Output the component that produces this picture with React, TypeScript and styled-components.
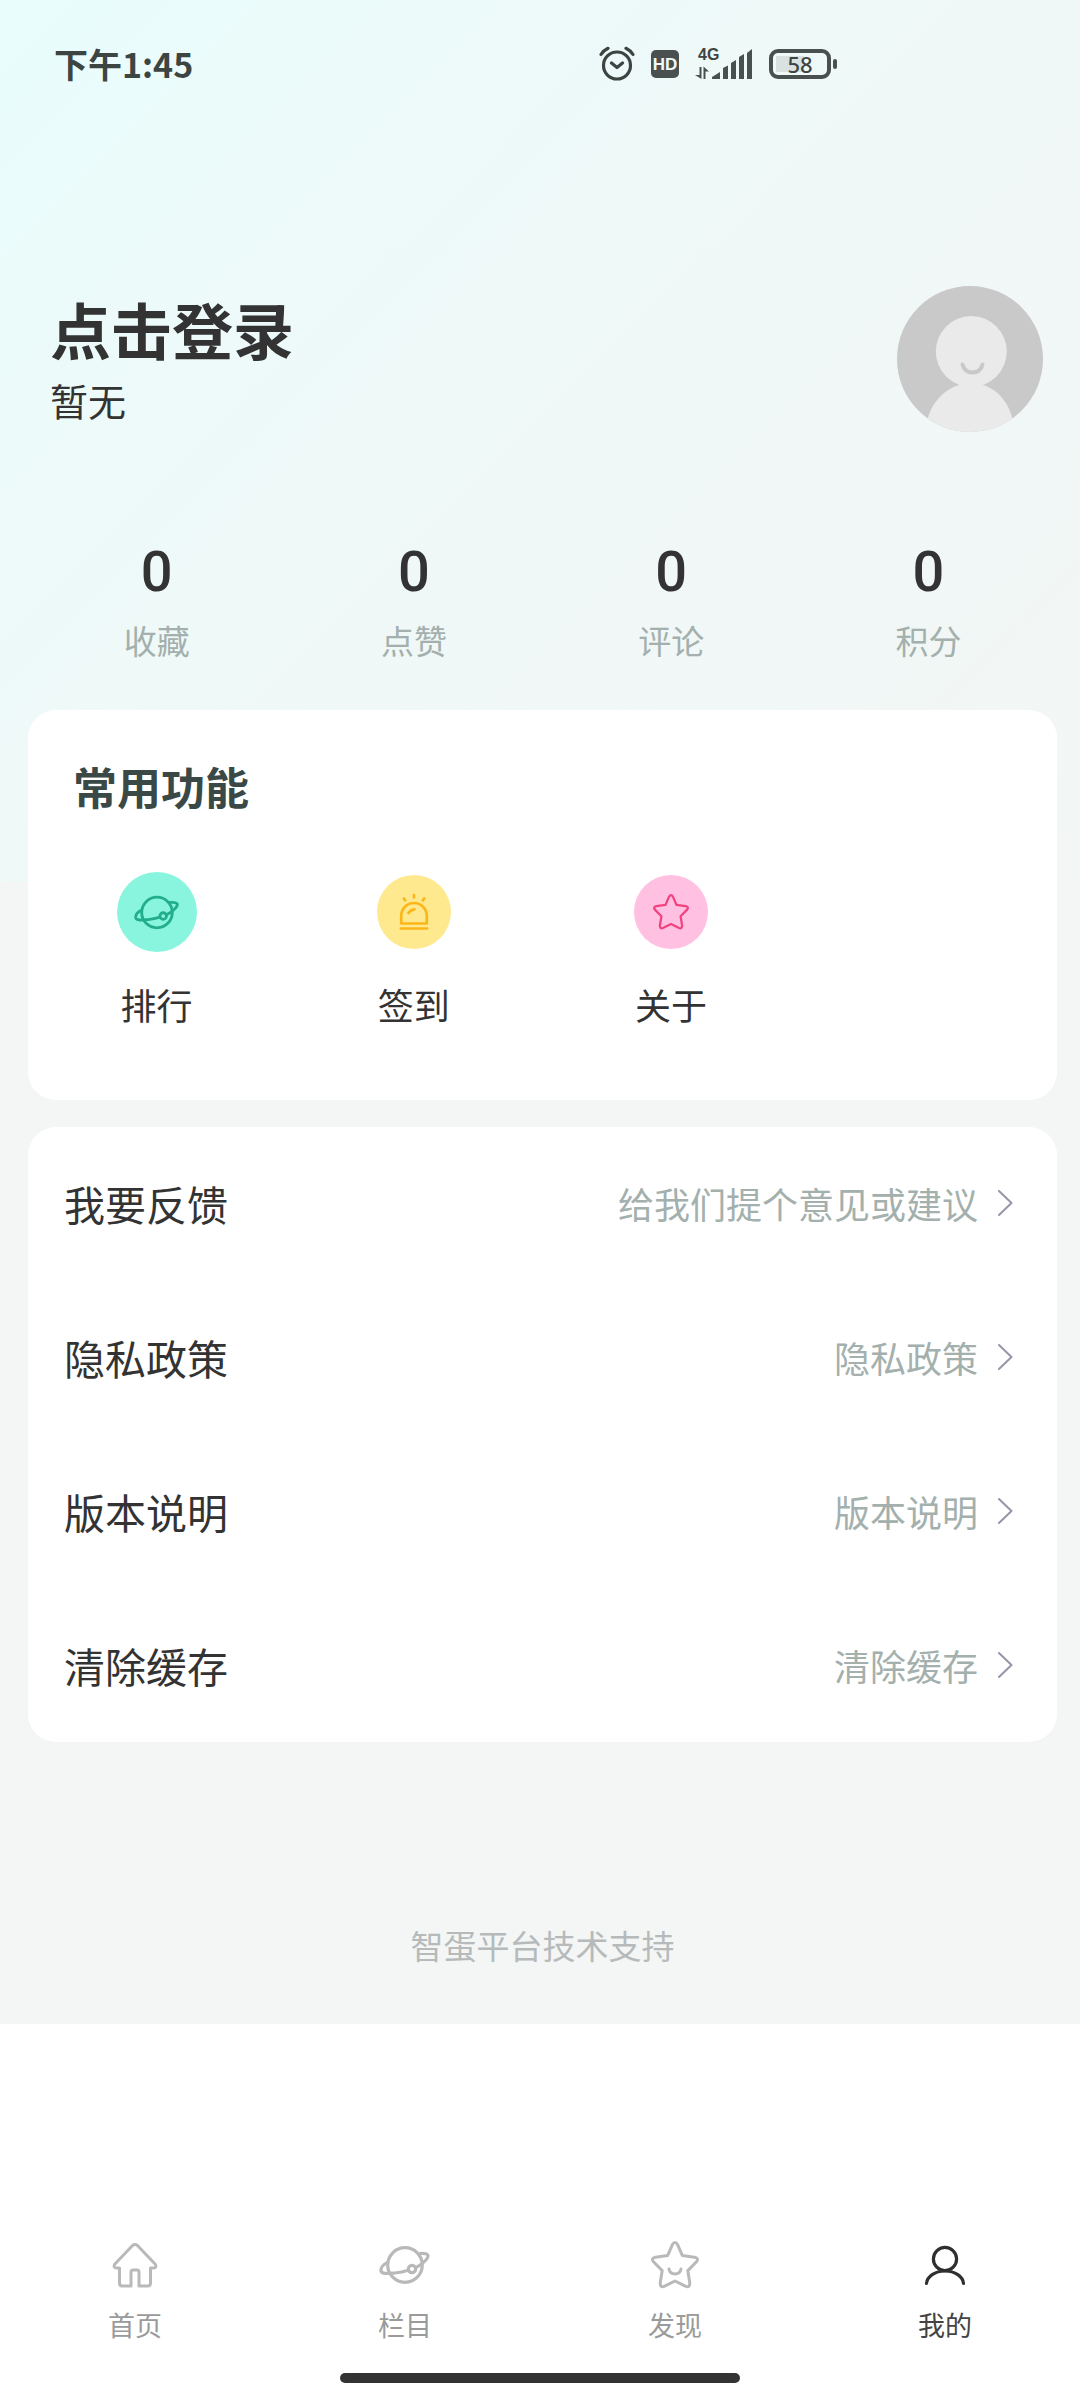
import React from "react";
import styled, { createGlobalStyle } from "styled-components";

const GlobalStyle = createGlobalStyle`
  *, *::before, *::after { box-sizing: border-box; }
  body {
    margin: 0;
    background: #fff;
    color: #333;
    font-family: "Noto Sans CJK SC", "Noto Sans", sans-serif;
  }
  button {
    margin: 0;
    padding: 0;
    border: 0;
    background: none;
    color: inherit;
    font: inherit;
    text-align: left;
    cursor: pointer;
  }
  a { color: inherit; text-decoration: none; }
  h1, h2, p, ul, dl, dd { margin: 0; padding: 0; }
  ul { list-style: none; }
  svg { display: block; }
`;

const Page = styled.div`
  display: flex;
  flex-direction: column;
  min-height: 100vh;
`;

const Content = styled.main`
  padding: 0 23px 54px 28px;
  background:
    linear-gradient(135deg, #e8fdfc 0%, #edfaf9 28%, #f0f8f7 60%, #f3f6f5 100%) top / 100% 882px no-repeat,
    #f3f6f5;
`;

const StatusBar = styled.div`
  display: flex;
  align-items: center;
  justify-content: space-between;
  height: 128px;
  padding: 0 220px 0 26px;
  color: #3d4543;
`;

const Clock = styled.time`
  font-size: 34px;
  font-weight: 700;
  line-height: 48px;
`;

const StatusIcons = styled.div`
  display: flex;
  align-items: center;
  gap: 16px;
`;

const HdBadge = styled.span`
  width: 28px;
  height: 28px;
  border-radius: 5px;
  background: #4a504f;
  color: #f0fafa;
  font: 700 17px/29px "Liberation Sans", sans-serif;
  text-align: center;
`;

const Signal = styled.div`
  position: relative;
`;

const Network = styled.span`
  position: absolute;
  top: 0;
  left: 3px;
  font: 700 16px/14px "Liberation Sans", sans-serif;
`;

const Battery = styled.div`
  display: flex;
  align-items: center;
  gap: 2px;

  &::after {
    content: "";
    width: 4px;
    height: 10px;
    border-radius: 2px;
    background: #4a504f;
  }
`;

const BatteryBody = styled.span`
  width: 62px;
  height: 30px;
  border: 4px solid #4a504f;
  border-radius: 9px;
  background: linear-gradient(90deg, #d9e2e1 58%, transparent 58%) 3px 3px / 48px 16px no-repeat;
  font: 500 22px/22px "Noto Sans", sans-serif;
  text-align: center;
`;

const Profile = styled.button`
  display: flex;
  align-items: center;
  justify-content: space-between;
  width: 100%;
  margin-top: 158px;
  padding: 0 14px 0 22px;
`;

const UserName = styled.h1`
  font-size: 61px;
  font-weight: 700;
  line-height: 82px;
`;

const UserNote = styled.p`
  font-size: 38px;
  line-height: 60px;
`;

const Stats = styled.dl`
  display: grid;
  grid-template-columns: repeat(4, 1fr);
  margin-top: 108px;
  text-align: center;
`;

const Stat = styled.div`
  display: flex;
  flex-direction: column-reverse;
  gap: 12px;
`;

const StatLabel = styled.dt`
  color: #a3b0ad;
  font-size: 33px;
  line-height: 48px;
`;

const StatValue = styled.dd`
  font-family: Roboto, "Noto Sans CJK SC", sans-serif;
  font-size: 56px;
  font-weight: 500;
  line-height: 64px;
`;

const Card = styled.section`
  border-radius: 28px;
  background: #fff;
`;

const FeatureCard = styled(Card)`
  margin-top: 46px;
  padding: 44px 0 68px;
`;

const CardTitle = styled.h2`
  padding: 0 45px;
  color: #3a4846;
  font-size: 44px;
  font-weight: 700;
  line-height: 64px;
`;

const Features = styled.div`
  display: grid;
  grid-template-columns: repeat(4, 1fr);
  margin-top: 54px;
`;

const Feature = styled.button`
  display: flex;
  flex-direction: column;
  align-items: center;
  gap: 24px;
  font-size: 36px;
  line-height: 56px;
`;

const IconSlot = styled.span`
  display: grid;
  place-items: center;
  height: 80px;
`;

const Disc = styled.span<{ $size: number; $bg: string; $ink: string }>`
  display: grid;
  place-items: center;
  width: ${(p) => p.$size}px;
  height: ${(p) => p.$size}px;
  border-radius: 50%;
  background: ${(p) => p.$bg};
  color: ${(p) => p.$ink};
`;

const MenuCard = styled(Card)`
  margin-top: 27px;
`;

const MenuList = styled.ul`
  display: grid;
  gap: 1px;
`;

const MenuRow = styled.button`
  display: flex;
  align-items: center;
  width: 100%;
  height: 153px;
  padding: 0 44px 2px 36px;
`;

const MenuLabel = styled.span`
  flex: 1;
  font-size: 41px;
  line-height: 60px;
`;

const MenuValue = styled.span`
  margin-right: 20px;
  color: #a3b0ad;
  font-size: 36px;
  line-height: 54px;
`;

const Support = styled.p`
  margin-top: 178px;
  color: #b6babb;
  font-size: 33px;
  line-height: 50px;
  text-align: center;
`;

const TabBar = styled.nav`
  display: grid;
  grid-template-columns: repeat(4, 1fr);
  margin-top: auto;
  padding-bottom: 28px;
`;

const Tab = styled.a<{ $active?: boolean }>`
  display: flex;
  flex-direction: column;
  align-items: center;
  gap: 16px;
  color: ${(p) => (p.$active ? "#444" : "#9a9a9a")};
  font-size: 27px;
  line-height: 40px;

  svg { color: ${(p) => (p.$active ? "#2f2f2f" : "#b9b9b9")}; }
`;

const HomeIndicator = styled.div`
  width: 37%;
  height: 10px;
  margin: 0 auto 17px;
  border-radius: 5px;
  background: #333;
`;

const stroke = {
  fill: "none",
  stroke: "currentColor",
  strokeLinecap: "round",
  strokeLinejoin: "round",
} as const;

const STAR =
  "M21.3 3.8Q24 -.6 26.7 3.8L31.4 14.6L43.5 16.3Q48.2 17.3 45.5 20.8L36.8 29.6L38.8 42Q38.8 46.8 34.8 45.4L24 40L13.2 45.4Q9.2 46.8 9.2 42L11.2 29.6L2.5 20.8Q-.2 17.3 4.5 16.3L16.6 14.6Z";

const AlarmIcon = () => (
  <svg width="36" height="36" viewBox="0 0 36 36" {...stroke} strokeWidth="3.2">
    <circle cx="18" cy="19.5" r="13.5" />
    <path d="M12.5 17L18 21.5L23.5 17M2 8.5Q4.5 4.5 9 2.3M34 8.5Q31.5 4.5 27 2.3" />
  </svg>
);

const SignalIcon = () => (
  <svg width="58" height="32" viewBox="0 0 58 32" fill="#4a504f">
    <path d="M17 31V29L25 24V31ZM28 31V20L33 17.5V31ZM36 31V15L41 12V31ZM44 31V9L49 6V31ZM52 31V5L57 1V31Z" />
    <path d="M4.5 19H6.5V31L0 27H4.5ZM8.5 31V18.5L14 23.5H10.5V31Z" />
  </svg>
);

const Avatar = () => (
  <svg width="146" height="146" viewBox="0 0 146 146" role="img" aria-label="头像">
    <clipPath id="avatar-clip">
      <circle cx="73" cy="73" r="73" />
    </clipPath>
    <g clipPath="url(#avatar-clip)">
      <rect width="146" height="146" fill="#c9c9c9" />
      <circle cx="74.3" cy="65.5" r="35.5" fill="#eaeaea" />
      <path d="M29 146C29 122 45 104 62 99V96H86V99C103 104 117 122 117 146Z" fill="#eaeaea" />
    </g>
    <path d="M65.5 78.5Q67.5 86.5 75.5 86.5T85.5 78.5" fill="none" stroke="#c9c9c9" strokeWidth="4" strokeLinecap="round" />
  </svg>
);

const PlanetIcon = ({ width = 52, height = 44 }: { width?: number; height?: number }) => (
  <svg width={width} height={height} viewBox="0 0 52 44" {...stroke} strokeWidth="3.2">
    <circle cx="26" cy="22" r="17.3" />
    <circle cx="33" cy="26" r="3.7" />
    <path d="M8.5 19.5C4 21.5 1.5 25 2 28C3 31.5 10 30.5 16 30C20 29.5 25 28.5 29.3 27.2" />
    <path d="M36.8 24.6C42 22 49.5 16 49 12.5C48 10 44 10.5 41 10.5" />
  </svg>
);

const BellIcon = () => (
  <svg width="36" height="44" viewBox="0 0 36 44" {...stroke} strokeWidth="2.7">
    <path d="M5.2 33.5V25.8A12.8 12.8 0 0 1 30.8 25.8V33.5ZM4.8 38.5H31.2" />
    <path d="M18 5V7.5M7.8 8.5L9.2 10.3M28.2 8.5L26.8 10.3M12.5 23Q14.5 19.8 18.5 19.3" />
  </svg>
);

const StarIcon = () => (
  <svg width="36" height="36" viewBox="0 0 48 48" {...stroke} strokeWidth="3">
    <path d={STAR} />
  </svg>
);

const SmileStarIcon = () => (
  <svg width="48" height="48" viewBox="0 0 48 48" {...stroke} strokeWidth="3">
    <path d={STAR} />
    <path d="M18 28Q19 33 24 33T30 28" />
  </svg>
);

const HomeIcon = () => (
  <svg width="48" height="48" viewBox="0 0 48 48" {...stroke} strokeWidth="3">
    <path d="M3.5 23.5L21.5 4.5Q24 2.5 26.5 4.5L44.5 23.5Q46 27 42.5 27H39.5V42Q39.5 45 36.5 45H28V31.5Q28 29 26 29H22Q20 29 20 31.5V45H11.5Q8.5 45 8.5 42V27H5.5Q2 27 3.5 23.5Z" />
  </svg>
);

const PersonIcon = () => (
  <svg width="48" height="48" viewBox="0 0 48 48" {...stroke} strokeWidth="3.2">
    <circle cx="24" cy="18" r="11.6" />
    <path d="M5.5 42.5C6 35.5 14 30 24 30S42 35.5 42.5 42.5" />
  </svg>
);

const ChevronIcon = () => (
  <svg width="15" height="26" viewBox="0 0 15 26" {...stroke} stroke="#9a94a9" strokeWidth="2">
    <path d="M1 1L13.5 13L1 25" />
  </svg>
);

const stats = [
  { label: "收藏", value: 0 },
  { label: "点赞", value: 0 },
  { label: "评论", value: 0 },
  { label: "积分", value: 0 },
];

const features = [
  { label: "排行", size: 80, bg: "#89f5de", ink: "#22ad8d", icon: <PlanetIcon width={46} height={39} /> },
  { label: "签到", size: 74, bg: "#ffe98f", ink: "#fcb61a", icon: <BellIcon /> },
  { label: "关于", size: 74, bg: "#ffc0e2", ink: "#f0437f", icon: <StarIcon /> },
];

const menu = [
  { label: "我要反馈", value: "给我们提个意见或建议" },
  { label: "隐私政策", value: "隐私政策" },
  { label: "版本说明", value: "版本说明" },
  { label: "清除缓存", value: "清除缓存" },
];

const tabs = [
  { label: "首页", href: "#home", icon: <HomeIcon /> },
  { label: "栏目", href: "#columns", icon: <PlanetIcon width={52} height={48} /> },
  { label: "发现", href: "#discover", icon: <SmileStarIcon /> },
  { label: "我的", href: "#me", icon: <PersonIcon />, active: true },
];

export default function App() {
  return (
    <Page>
      <GlobalStyle />
      <Content>
        <StatusBar>
          <Clock dateTime="13:45">下午1:45</Clock>
          <StatusIcons>
            <AlarmIcon />
            <HdBadge>HD</HdBadge>
            <Signal>
              <Network>4G</Network>
              <SignalIcon />
            </Signal>
            <Battery>
              <BatteryBody>58</BatteryBody>
            </Battery>
          </StatusIcons>
        </StatusBar>

        <Profile type="button">
          <div>
            <UserName>点击登录</UserName>
            <UserNote>暂无</UserNote>
          </div>
          <Avatar />
        </Profile>

        <Stats>
          {stats.map((s) => (
            <Stat key={s.label}>
              <StatLabel>{s.label}</StatLabel>
              <StatValue>{s.value}</StatValue>
            </Stat>
          ))}
        </Stats>

        <FeatureCard>
          <CardTitle>常用功能</CardTitle>
          <Features>
            {features.map((f) => (
              <Feature key={f.label} type="button">
                <IconSlot>
                  <Disc $size={f.size} $bg={f.bg} $ink={f.ink}>
                    {f.icon}
                  </Disc>
                </IconSlot>
                {f.label}
              </Feature>
            ))}
          </Features>
        </FeatureCard>

        <MenuCard>
          <MenuList>
            {menu.map((m) => (
              <li key={m.label}>
                <MenuRow type="button">
                  <MenuLabel>{m.label}</MenuLabel>
                  <MenuValue>{m.value}</MenuValue>
                  <ChevronIcon />
                </MenuRow>
              </li>
            ))}
          </MenuList>
        </MenuCard>

        <Support>智蛋平台技术支持</Support>
      </Content>

      <TabBar>
        {tabs.map((t) => (
          <Tab key={t.label} href={t.href} $active={t.active} aria-current={t.active ? "page" : undefined}>
            {t.icon}
            {t.label}
          </Tab>
        ))}
      </TabBar>
      <HomeIndicator />
    </Page>
  );
}
